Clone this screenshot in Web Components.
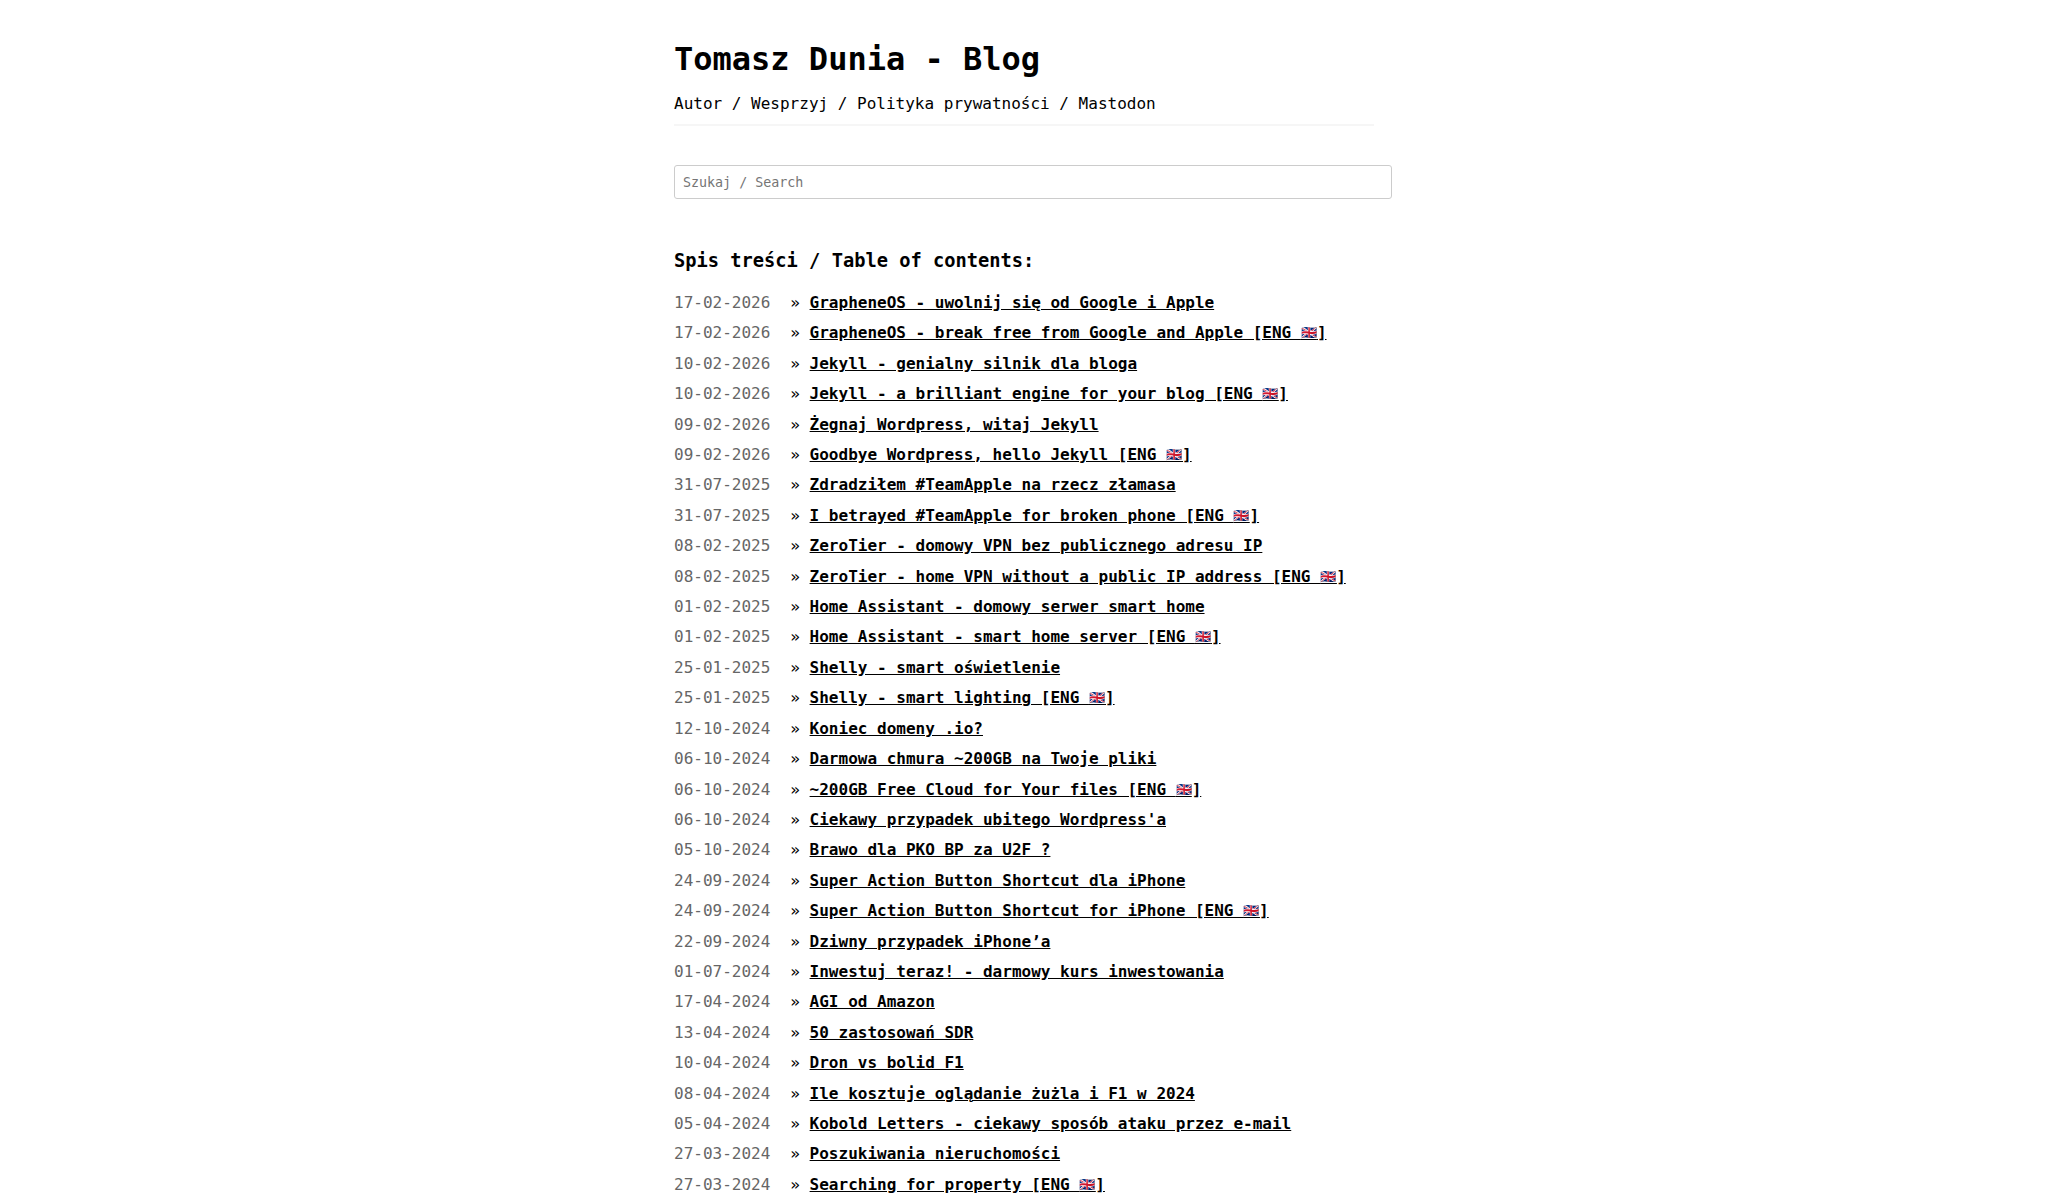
<!DOCTYPE html>
<html lang="pl">
<head>
<meta charset="utf-8">
<meta name="viewport" content="width=device-width, initial-scale=1">
<title>Tomasz Dunia - Blog</title>
<style>
  body {
    margin: 0;
    background: #fff;
    color: #000;
    font: 16px/20px Menlo, "DejaVu Sans Mono", monospace;
  }
</style>
</head>
<body>
<blog-page>
  <blog-header slot="header" h1="Tomasz Dunia - Blog">
    <a href="#autor">Autor</a> / <a href="#wesprzyj">Wesprzyj</a> / <a href="#polityka">Polityka prywatności</a> / <a href="#mastodon">Mastodon</a>
  </blog-header>
  <blog-search label="Szukaj / Search"></blog-search>
  <blog-posts h3="Spis treści / Table of contents:"></blog-posts>
</blog-page>

<script>
const posts = [
  ['17-02-2026', 'GrapheneOS - uwolnij się od Google i Apple'],
  ['17-02-2026', 'GrapheneOS - break free from Google and Apple [ENG 🇬🇧]'],
  ['10-02-2026', 'Jekyll - genialny silnik dla bloga'],
  ['10-02-2026', 'Jekyll - a brilliant engine for your blog [ENG 🇬🇧]'],
  ['09-02-2026', 'Żegnaj Wordpress, witaj Jekyll'],
  ['09-02-2026', 'Goodbye Wordpress, hello Jekyll [ENG 🇬🇧]'],
  ['31-07-2025', 'Zdradziłem #TeamApple na rzecz złamasa'],
  ['31-07-2025', 'I betrayed #TeamApple for broken phone [ENG 🇬🇧]'],
  ['08-02-2025', 'ZeroTier - domowy VPN bez publicznego adresu IP'],
  ['08-02-2025', 'ZeroTier - home VPN without a public IP address [ENG 🇬🇧]'],
  ['01-02-2025', 'Home Assistant - domowy serwer smart home'],
  ['01-02-2025', 'Home Assistant - smart home server [ENG 🇬🇧]'],
  ['25-01-2025', 'Shelly - smart oświetlenie'],
  ['25-01-2025', 'Shelly - smart lighting [ENG 🇬🇧]'],
  ['12-10-2024', 'Koniec domeny .io?'],
  ['06-10-2024', 'Darmowa chmura ~200GB na Twoje pliki'],
  ['06-10-2024', '~200GB Free Cloud for Your files [ENG 🇬🇧]'],
  ['06-10-2024', 'Ciekawy przypadek ubitego Wordpress\'a'],
  ['05-10-2024', 'Brawo dla PKO BP za U2F ?'],
  ['24-09-2024', 'Super Action Button Shortcut dla iPhone'],
  ['24-09-2024', 'Super Action Button Shortcut for iPhone [ENG 🇬🇧]'],
  ['22-09-2024', 'Dziwny przypadek iPhone’a'],
  ['01-07-2024', 'Inwestuj teraz! - darmowy kurs inwestowania'],
  ['17-04-2024', 'AGI od Amazon'],
  ['13-04-2024', '50 zastosowań SDR'],
  ['10-04-2024', 'Dron vs bolid F1'],
  ['08-04-2024', 'Ile kosztuje oglądanie żużla i F1 w 2024'],
  ['05-04-2024', 'Kobold Letters - ciekawy sposób ataku przez e-mail'],
  ['27-03-2024', 'Poszukiwania nieruchomości'],
  ['27-03-2024', 'Searching for property [ENG 🇬🇧]']
];

class BlogPage extends HTMLElement {
  constructor() {
    super();
    this.attachShadow({mode: 'open'}).innerHTML = `
      <style>
        :host {
          display: flex;
          flex-direction: column;
          box-sizing: border-box;
          max-width: 700px;
          min-height: 100vh;
          margin: auto;
          padding-top: 39px;
        }
        main {
          display: flex;
          flex: 1;
          flex-direction: column;
        }
      </style>

      <slot name="header"></slot>
      <main><slot></slot></main>
    `;
  }
}

class BlogHeader extends HTMLElement {
  constructor() {
    super();
    this.attachShadow({mode: 'open'}).innerHTML = `
      <style>
        :host {
          display: block;
          padding-bottom: 10px;
          border-bottom: 2px solid #f6f6f6;
        }
        h1 {
          margin: 0 0 15px;
          font-size: 32px;
          line-height: 40px;
        }
        ::slotted(a) {
          color: inherit;
          text-decoration: none;
        }
      </style>

      <h1>${this.getAttribute('h1')}</h1>
      <nav><slot></slot></nav>
    `;
  }
}

class BlogSearch extends HTMLElement {
  constructor() {
    super();
    this.attachShadow({mode: 'open'}).innerHTML = `
      <style>
        :host {
          display: block;
          margin: 39px 0 50px;
        }
        /* the field is wider than the column by its padding and border */
        input {
          display: block;
          box-sizing: content-box;
          width: 100%;
          height: 16px;
          padding: 8px;
          border: 1px solid #ccc;
          border-radius: 3px;
          font-family: inherit;
        }
      </style>

      <input type="search" aria-label="${this.getAttribute('label')}" placeholder="${this.getAttribute('label')}">
    `;

    this.shadowRoot.querySelector('input').addEventListener('input', e => {
      document.querySelector('blog-posts').filter(e.target.value);
    });
  }
}

class BlogPosts extends HTMLElement {
  constructor() {
    super();
    this.attachShadow({mode: 'open'}).innerHTML = `
      <style>
        :host {
          display: flex;
          flex: 1;
          flex-direction: column;
        }
        h3 {
          margin: 0 0 21px;
          line-height: 24px;
        }
        ul {
          display: flex;
          flex: 1;
          flex-direction: column;
          justify-content: space-between;
          gap: 12px;
          margin: 0;
          padding: 0;
          list-style: none;
        }
        li {
          display: flex;
          gap: 20px;
          line-height: 18px;
        }
        li[hidden] {
          display: none;
        }
        time {
          color: #666;
        }
        a {
          color: inherit;
          font-weight: bold;
        }
        .flag {
          font-size: 13px;
          line-height: 1;
          vertical-align: 1px;
        }
      </style>

      <h3>${this.getAttribute('h3')}</h3>
      <ul>
        ${posts.map(([date, title], i) => `
          <li>
            <time>${date}</time>
            <span>» <a href="#post-${i}">${title.replace('🇬🇧', '<span class="flag">🇬🇧</span>')}</a></span>
          </li>
        `).join('')}
      </ul>
    `;
  }

  filter(text) {
    this.shadowRoot.querySelectorAll('li').forEach(li => {
      li.hidden = !li.textContent.toLowerCase().includes(text.toLowerCase());
    });
  }
}

customElements.define('blog-page', BlogPage);
customElements.define('blog-header', BlogHeader);
customElements.define('blog-search', BlogSearch);
customElements.define('blog-posts', BlogPosts);
</script>
</body>
</html>
